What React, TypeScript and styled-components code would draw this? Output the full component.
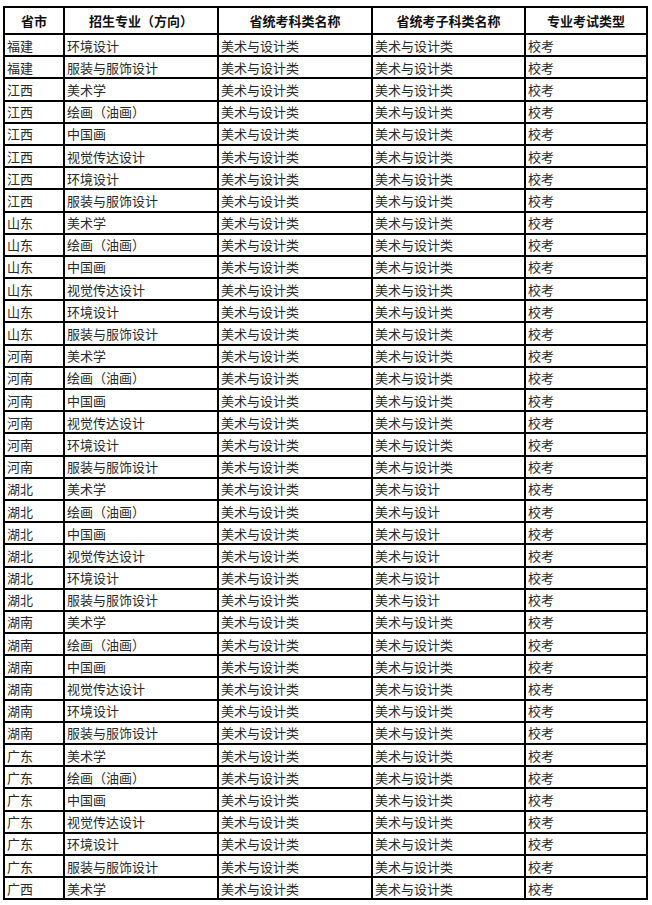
import React from "react";
import styled, { createGlobalStyle } from "styled-components";

const GlobalStyle = createGlobalStyle`
  body {
    margin: 0;
    background: #ffffff;
    font-family: "Noto Sans CJK SC", "Noto Sans", sans-serif;
  }
`;

const Page = styled.div`
  padding: 6px 4px 4px 3px;
`;

const Table = styled.table`
  border-collapse: separate;
  border-spacing: 0;
  table-layout: fixed;
  width: 645px;
  border-top: 2px solid #000;
  border-left: 2px solid #000;
`;

const HeadCell = styled.th<{ $w: number }>`
  width: ${(p) => p.$w}px;
  height: 25px;
  padding: 0;
  border-right: 2px solid #000;
  border-bottom: 2px solid #000;
  font-size: 13px;
  font-weight: 700;
  color: #111;
  text-align: center;
  vertical-align: middle;
  line-height: 1;
`;

const Cell = styled.td`
  height: 20.2px;
  padding: 0 0 0 2px;
  border-right: 2px solid #000;
  border-bottom: 2px solid #000;
  font-size: 13px;
  font-weight: 400;
  color: #2a2a2a;
  line-height: 1;
  vertical-align: middle;
  white-space: nowrap;
  overflow: hidden;
`;

const majors = ["美术学", "绘画（油画）", "中国画", "视觉传达设计", "环境设计", "服装与服饰设计"];

type Row = [string, string, string, string, string];

const rows: Row[] = [];
["环境设计", "服装与服饰设计"].forEach((m) => rows.push(["福建", m, "美术与设计类", "美术与设计类", "校考"]));
["江西", "山东", "河南", "湖北", "湖南", "广东"].forEach((p) =>
  majors.forEach((m) =>
    rows.push([p, m, "美术与设计类", p === "湖北" ? "美术与设计" : "美术与设计类", "校考"])
  )
);
rows.push(["广西", "美术学", "美术与设计类", "美术与设计类", "校考"]);

// widths are content widths; each column also carries a 2px right border
const headers: [string, number][] = [
  ["省市", 58],
  ["招生专业（方向）", 152],
  ["省统考科类名称", 152],
  ["省统考子科类名称", 151],
  ["专业考试类型", 120],
];

export default function App() {
  return (
    <Page>
      <GlobalStyle />
      <Table>
        <thead>
          <tr>
            {headers.map(([h, w]) => (
              <HeadCell key={h} $w={w}>
                {h}
              </HeadCell>
            ))}
          </tr>
        </thead>
        <tbody>
          {rows.map((r, i) => (
            <tr key={i}>
              {r.map((c, j) => (
                <Cell key={j}>{c}</Cell>
              ))}
            </tr>
          ))}
        </tbody>
      </Table>
    </Page>
  );
}
